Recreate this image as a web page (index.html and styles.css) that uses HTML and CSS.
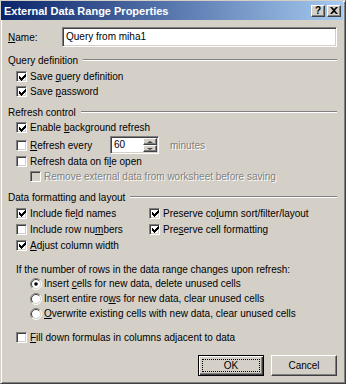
FILE: index.html
```html
<!DOCTYPE html>
<html>
<head>
    <title>External Data Range Properties</title>
    <meta charset="UTF-8">
    <link rel="stylesheet" href="styles.css">
</head>
<body>
    <div class="window">
        <div class="titlebar">
            <span class="title">External Data Range Properties</span>
            <div class="title-buttons">
                <span class="tbtn">?</span>
                <span class="tbtn"><svg width="8" height="7" viewBox="0 0 8 7"><path d="M0 0h2l2 2 2-2h2L5 3.5 8 7H6L4 5 2 7H0l3-3.5z" fill="#000"/></svg></span>
            </div>
        </div>

        <div class="content">
            <div class="name-row">
                <span class="name-label"><u>N</u>ame:</span>
                <div class="textbox">Query from miha1</div>
            </div>

            <div class="group">Query definition</div>
            <div class="opt"><span class="cb"><svg class="tick" width="7" height="7" viewBox="0 0 7 7"><path d="M0 2h1v1h1v1h1v-1h1v-1h1v-1h1v-1h1v3h-1v1h-1v1h-1v1h-1v1h-1v-1h-1v-1h-1z"/></svg></span><span>Save <u>q</u>uery definition</span></div>
            <div class="opt"><span class="cb"><svg class="tick" width="7" height="7" viewBox="0 0 7 7"><path d="M0 2h1v1h1v1h1v-1h1v-1h1v-1h1v-1h1v3h-1v1h-1v1h-1v1h-1v1h-1v-1h-1v-1h-1z"/></svg></span><span>Save <u>p</u>assword</span></div>

            <div class="group">Refresh control</div>
            <div class="opt first"><span class="cb"><svg class="tick" width="7" height="7" viewBox="0 0 7 7"><path d="M0 2h1v1h1v1h1v-1h1v-1h1v-1h1v-1h1v3h-1v1h-1v1h-1v1h-1v1h-1v-1h-1v-1h-1z"/></svg></span><span>Enable <u>b</u>ackground refresh</span></div>
            <div class="opt spin-row">
                <span class="cb"></span>
                <span class="spin-label"><u>R</u>efresh every</span>
                <div class="spin">
                    <span class="spin-value">60</span>
                    <span class="spin-buttons">
                        <span class="spin-btn"><span class="arrow-up"></span></span>
                        <span class="spin-btn"><span class="arrow-down"></span></span>
                    </span>
                </div>
                <span class="disabled-text minutes">minutes</span>
            </div>
            <div class="opt"><span class="cb"></span><span>Refresh data on fi<u>l</u>e open</span></div>
            <div class="opt indent"><span class="cb disabled"></span><span class="disabled-text">Remove external data from worksheet before saving</span></div>

            <div class="group">Data formatting and layout</div>
            <div class="cols">
                <div class="col">
                    <div class="opt tall"><span class="cb"><svg class="tick" width="7" height="7" viewBox="0 0 7 7"><path d="M0 2h1v1h1v1h1v-1h1v-1h1v-1h1v-1h1v3h-1v1h-1v1h-1v1h-1v1h-1v-1h-1v-1h-1z"/></svg></span><span>Include fie<u>l</u>d names</span></div>
                    <div class="opt tall"><span class="cb"></span><span>Include row nu<u>m</u>bers</span></div>
                    <div class="opt tall"><span class="cb"><svg class="tick" width="7" height="7" viewBox="0 0 7 7"><path d="M0 2h1v1h1v1h1v-1h1v-1h1v-1h1v-1h1v3h-1v1h-1v1h-1v1h-1v1h-1v-1h-1v-1h-1z"/></svg></span><span><u>A</u>djust column width</span></div>
                </div>
                <div class="col">
                    <div class="opt tall"><span class="cb"><svg class="tick" width="7" height="7" viewBox="0 0 7 7"><path d="M0 2h1v1h1v1h1v-1h1v-1h1v-1h1v-1h1v3h-1v1h-1v1h-1v1h-1v1h-1v-1h-1v-1h-1z"/></svg></span><span>Preserve co<u>l</u>umn sort/filter/layout</span></div>
                    <div class="opt tall"><span class="cb"><svg class="tick" width="7" height="7" viewBox="0 0 7 7"><path d="M0 2h1v1h1v1h1v-1h1v-1h1v-1h1v-1h1v3h-1v1h-1v1h-1v1h-1v1h-1v-1h-1v-1h-1z"/></svg></span><span>Pre<u>s</u>erve cell formatting</span></div>
                </div>
            </div>

            <div class="question">If the number of rows in the data range changes upon refresh:</div>
            <div class="opt radio-row"><svg class="radio" width="12" height="12" viewBox="0 0 12 12"><circle cx="6" cy="6" r="5" fill="#fff"/><path d="M2.1 9.9A5.5 5.5 0 0 1 9.9 2.1" stroke="#808080" fill="none"/><path d="M9.9 2.1A5.5 5.5 0 0 1 2.1 9.9" stroke="#fff" fill="none"/><path d="M2.8 9.2A4.5 4.5 0 0 1 9.2 2.8" stroke="#404040" fill="none"/><path d="M9.2 2.8A4.5 4.5 0 0 1 2.8 9.2" stroke="#d4d0c8" fill="none"/><circle cx="6" cy="6" r="1.8" fill="#000"/></svg><span>Insert <u>c</u>ells for new data, delete unused cells</span></div>
            <div class="opt radio-row"><svg class="radio" width="12" height="12" viewBox="0 0 12 12"><circle cx="6" cy="6" r="5" fill="#fff"/><path d="M2.1 9.9A5.5 5.5 0 0 1 9.9 2.1" stroke="#808080" fill="none"/><path d="M9.9 2.1A5.5 5.5 0 0 1 2.1 9.9" stroke="#fff" fill="none"/><path d="M2.8 9.2A4.5 4.5 0 0 1 9.2 2.8" stroke="#404040" fill="none"/><path d="M9.2 2.8A4.5 4.5 0 0 1 2.8 9.2" stroke="#d4d0c8" fill="none"/></svg><span>Insert entire ro<u>w</u>s for new data, clear unused cells</span></div>
            <div class="opt radio-row"><svg class="radio" width="12" height="12" viewBox="0 0 12 12"><circle cx="6" cy="6" r="5" fill="#fff"/><path d="M2.1 9.9A5.5 5.5 0 0 1 9.9 2.1" stroke="#808080" fill="none"/><path d="M9.9 2.1A5.5 5.5 0 0 1 2.1 9.9" stroke="#fff" fill="none"/><path d="M2.8 9.2A4.5 4.5 0 0 1 9.2 2.8" stroke="#404040" fill="none"/><path d="M9.2 2.8A4.5 4.5 0 0 1 2.8 9.2" stroke="#d4d0c8" fill="none"/></svg><span><u>O</u>verwrite existing cells with new data, clear unused cells</span></div>

            <div class="opt fill-row"><span class="cb"></span><span><u>F</u>ill down formulas in columns adjacent to data</span></div>

            <div class="buttons">
                <button class="btn default"><span class="focus">OK</span></button>
                <button class="btn">Cancel</button>
            </div>
        </div>
    </div>
</body>
</html>
```

FILE: styles.css
```css
body {
    margin: 0;
    font-family: "Liberation Sans", Arial, sans-serif;
    font-size: 10px;
    color: #000;
    background: #d4d0c8;
}
u {
    text-decoration-thickness: 1px;
    text-underline-offset: 1px;
}
.window {
    width: 346px;
    height: 384px;
    box-sizing: border-box;
    background: #d4d0c8;
    border: 1px solid;
    border-color: #d4d0c8 #404040 #404040 #d4d0c8;
    box-shadow: inset 1px 1px #fff, inset -1px -1px #808080;
    padding: 0 2px 2px 0;
}
.titlebar {
    height: 19px;
    display: flex;
    align-items: center;
    justify-content: space-between;
    padding: 0 2px 0 3px;
    background: linear-gradient(to right, #0a246a, #a6caf0);
}
.title {
    color: #fff;
    font-weight: bold;
    font-size: 11px;
}
.title-buttons {
    display: flex;
    gap: 2px;
}
.tbtn {
    width: 14px;
    height: 12px;
    box-sizing: border-box;
    display: flex;
    align-items: center;
    justify-content: center;
    background: #d4d0c8;
    border: 1px solid;
    border-color: #fff #404040 #404040 #fff;
    box-shadow: inset -1px -1px #808080;
    font-weight: bold;
    font-size: 10px;
    line-height: 1;
}
.content {
    padding: 0 6px 0 7px;
}
.name-row {
    display: flex;
    align-items: center;
    height: 20px;
    margin-top: 7px;
}
.name-label {
    width: 54px;
}
.textbox {
    flex: 1;
    height: 20px;
    box-sizing: border-box;
    border: 1px solid;
    border-color: #808080 #fff #fff #808080;
    box-shadow: inset 1px 1px #404040, inset -1px -1px #d4d0c8;
    background: #fff;
    padding-left: 3px;
    line-height: 18px;
}
.group {
    display: flex;
    align-items: center;
    height: 14px;
    margin-top: 6px;
}
.group::after {
    content: "";
    flex: 1;
    margin-left: 5px;
    border-top: 1px solid #808080;
    border-bottom: 1px solid #fff;
}
.opt {
    display: flex;
    align-items: center;
    height: 15px;
    padding-left: 8px;
    white-space: nowrap;
}
.group + .opt {
    margin-top: 2px;
}
.group + .opt.first {
    margin-top: 1px;
}
.opt.tall {
    height: 16px;
}
.opt.indent {
    padding-left: 22px;
}
.cb {
    width: 11px;
    height: 11px;
    box-sizing: border-box;
    flex: none;
    display: flex;
    align-items: center;
    justify-content: center;
    margin-right: 3px;
    border: 1px solid;
    border-color: #808080 #fff #fff #808080;
    box-shadow: inset 1px 1px #404040, inset -1px -1px #d4d0c8;
    background: #fff;
}
.cb.disabled {
    background: #d4d0c8;
}
.tick {
    fill: #000;
    margin: 1px 0 0 1px;
}
.disabled-text {
    color: #808080;
    text-shadow: 1px 1px #fff;
}
.spin-row {
    height: 18px;
    margin-top: 1px;
}
.spin-label {
    width: 80px;
}
.spin {
    display: flex;
    width: 49px;
    height: 18px;
    box-sizing: border-box;
    border: 1px solid;
    border-color: #808080 #fff #fff #808080;
    box-shadow: inset 1px 1px #404040, inset -1px -1px #d4d0c8;
    background: #fff;
    padding: 1px;
}
.spin-value {
    flex: 1;
    padding-left: 2px;
    line-height: 14px;
}
.spin-buttons {
    display: flex;
    flex-direction: column;
    width: 14px;
}
.spin-btn {
    flex: 1;
    display: flex;
    align-items: center;
    justify-content: center;
    background: #d4d0c8;
    border: 1px solid;
    border-color: #fff #404040 #404040 #fff;
    box-shadow: inset -1px -1px #808080;
}
.arrow-up {
    border-left: 3px solid transparent;
    border-right: 3px solid transparent;
    border-bottom: 2px solid #404040;
}
.arrow-down {
    border-left: 3px solid transparent;
    border-right: 3px solid transparent;
    border-top: 2px solid #404040;
}
.minutes {
    margin-left: 11px;
}
.cols {
    display: grid;
    grid-template-columns: 133px 1fr;
    margin-top: 1px;
}
.question {
    height: 13px;
    line-height: 13px;
    padding-left: 8px;
    margin-top: 10px;
}
.radio-row {
    padding-left: 22px;
}
.radio {
    flex: none;
    margin-right: 2px;
}
.fill-row {
    margin-top: 9px;
}
.buttons {
    display: flex;
    justify-content: flex-end;
    gap: 7px;
    margin-top: 10px;
}
.btn {
    width: 66px;
    height: 21px;
    box-sizing: border-box;
    font-family: "Liberation Sans", Arial, sans-serif;
    font-size: 10px;
    color: #000;
    background: #d4d0c8;
    border: 1px solid;
    border-color: #fff #404040 #404040 #fff;
    box-shadow: inset -1px -1px #808080;
    padding: 0;
}
.btn.default {
    border: 1px solid #000;
    box-shadow: inset 1px 1px #fff, inset -1px -1px #404040, inset -2px -2px #808080;
    padding: 3px;
}
.focus {
    display: flex;
    align-items: center;
    justify-content: center;
    height: 100%;
    border: 1px dotted #000;
    box-sizing: border-box;
}
```
